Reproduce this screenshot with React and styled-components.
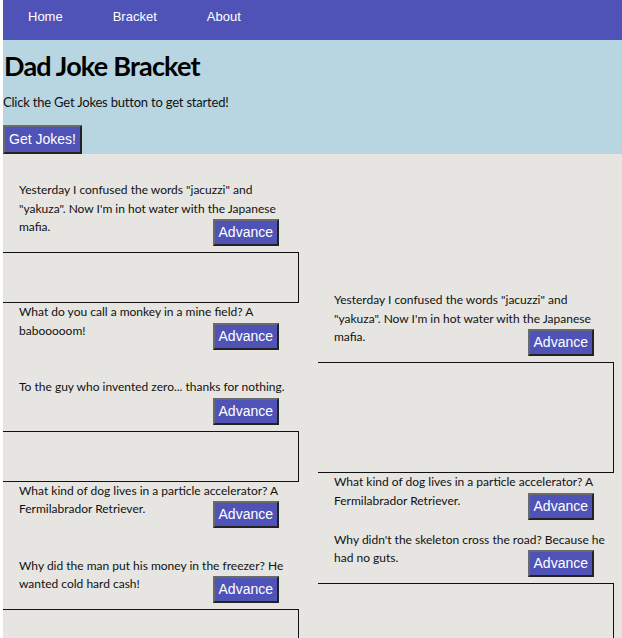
import React from "react";
import styled, { createGlobalStyle } from "styled-components";

const GlobalStyle = createGlobalStyle`
  html, body {
    margin: 0;
    padding: 0;
    overflow: hidden;
  }
  body {
    font-family: "Lato", "Open Sans", sans-serif;
  }
`;

const Page = styled.div`
  margin-left: 3px;
  min-height: 100vh;
  display: flex;
  flex-direction: column;
  background: #e6e5e1;
`;

const NavBar = styled.nav`
  height: 40px;
  box-sizing: border-box;
  padding-top: 9px;
  background: #4f53b7;
  display: flex;
`;

const NavLink = styled.a`
  padding: 0 25px;
  font-family: "Liberation Sans", Arial, sans-serif;
  font-size: 13px;
  line-height: 15px;
  color: #fff;
  text-decoration: none;
`;

const Header = styled.header`
  background: #b8d5e2;
  display: flex;
  flex-direction: column;
  align-items: flex-start;
`;

const Title = styled.h1`
  margin: 9px 0 0 1px;
  font-family: "Lato", sans-serif;
  font-size: 27px;
  line-height: 34px;
  font-weight: 700;
  letter-spacing: -0.8px;
  color: #000;
`;

const Intro = styled.p`
  margin: 10px 0 0;
  font-family: "Lato", sans-serif;
  font-size: 13px;
  line-height: 18px;
  letter-spacing: -0.2px;
  color: #111;
`;

const Button = styled.button`
  font-family: "Liberation Sans", Arial, sans-serif;
  font-size: 14px;
  line-height: 16px;
  color: #fff;
  background: #4f53b7;
  border: 2px solid;
  border-color: #6a6a6a #222 #222 #6a6a6a;
  padding: ${p => (p.$big ? "4px 4px 5px" : "3px 4px 4px")};
  cursor: pointer;
`;

const GetJokes = styled(Button)`
  margin-top: 14px;
`;

const Bracket = styled.main`
  display: grid;
  grid-template-columns: 296px 296px;
  column-gap: 19px;
  align-items: start;
`;

const Round = styled.section`
  display: flex;
  flex-direction: column;
  padding-top: ${p => p.$top}px;
  gap: ${p => p.$gap}px;
`;

const Match = styled.div`
  display: flex;
  flex-direction: column;
`;

const Entry = styled.div`
  display: flow-root;
  padding: 0 6px 0 16px;
  margin-bottom: ${p => (p.$first ? 6 : 0)}px;
  font-family: "Lato", "Open Sans", sans-serif;
  font-size: 12px;
  line-height: 18.5px;
  color: #111;
`;

const Advance = styled(Button)`
  float: right;
  margin: 1px 14px 0 0;
`;

const Connector = styled.div`
  height: ${p => p.$h}px;
  box-sizing: border-box;
  border: 1px solid #111;
  border-left: none;
`;

const jokes = {
  jacuzzi: 'Yesterday I confused the words "jacuzzi" and "yakuza". Now I\'m in hot water with the Japanese mafia.',
  monkey: "What do you call a monkey in a mine field? A babooooom!",
  zero: "To the guy who invented zero... thanks for nothing.",
  dog: "What kind of dog lives in a particle accelerator? A Fermilabrador Retriever.",
  freezer: "Why did the man put his money in the freezer? He wanted cold hard cash!",
  skeleton: "Why didn't the skeleton cross the road? Because he had no guts.",
};

const rounds = [
  {
    top: 27,
    gap: 28.5,
    box: 51,
    matches: [
      [jokes.jacuzzi, jokes.monkey],
      [jokes.zero, jokes.dog],
      [jokes.freezer, jokes.skeleton],
    ],
  },
  {
    top: 137,
    gap: 11,
    box: 111,
    matches: [
      [jokes.jacuzzi, jokes.dog],
      [jokes.skeleton, null],
    ],
  },
];

const JokeEntry = ({ text, first }) => (
  <Entry $first={first}>
    {text}
    {text && <Advance>Advance</Advance>}
  </Entry>
);

const App = () => (
  <>
    <GlobalStyle />
    <Page>
      <NavBar>
        <NavLink>Home</NavLink>
        <NavLink>Bracket</NavLink>
        <NavLink>About</NavLink>
      </NavBar>
      <Header>
        <Title>Dad Joke Bracket</Title>
        <Intro>Click the Get Jokes button to get started!</Intro>
        <GetJokes $big>Get Jokes!</GetJokes>
      </Header>
      <Bracket>
        {rounds.map((round, r) => (
          <Round key={r} $top={round.top} $gap={round.gap}>
            {round.matches.map(([a, b], m) => (
              <Match key={m}>
                <JokeEntry text={a} first />
                <Connector $h={round.box} />
                <JokeEntry text={b} />
              </Match>
            ))}
          </Round>
        ))}
      </Bracket>
    </Page>
  </>
);

export default App;
